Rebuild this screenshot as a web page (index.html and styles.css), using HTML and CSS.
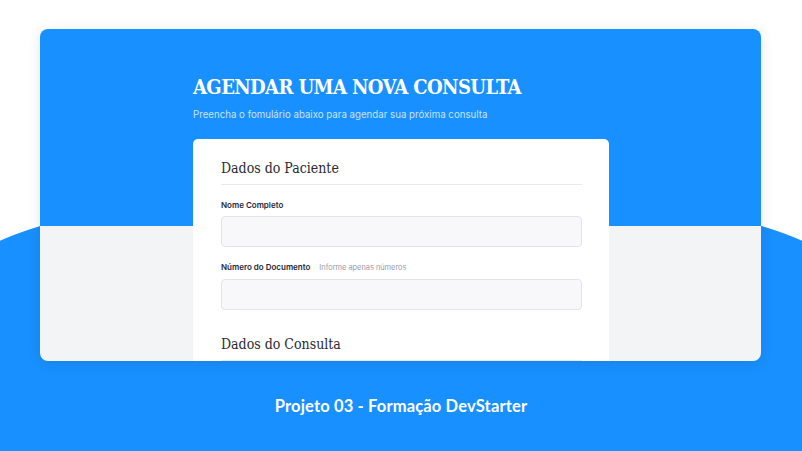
FILE: index.html
```html
<!DOCTYPE html>
<html lang="pt-BR">
<head>
<meta charset="utf-8">
<title>Agendar uma nova consulta</title>
<link rel="stylesheet" href="styles.css">
</head>
<body>
  <main class="stage">
    <section class="window">
      <header class="hero">
        <h1 class="hero-title">AGENDAR UMA NOVA CONSULTA</h1>
        <p class="hero-sub">Preencha o fomulário abaixo para agendar sua próxima consulta</p>
      </header>
      <form class="form-card">
        <h2 class="section-title">Dados do Paciente</h2>
        <div class="field">
          <label class="field-label">Nome Completo</label>
          <div class="field-input"></div>
        </div>
        <div class="field">
          <label class="field-label">Número do Documento <span class="field-hint">Informe apenas números</span></label>
          <div class="field-input"></div>
        </div>
        <h2 class="section-title section-gap">Dados do Consulta</h2>
      </form>
    </section>
  </main>
  <footer class="credit">Projeto 03 - Formação DevStarter</footer>
</body>
</html>
```

FILE: styles.css
```css
html, body {
  margin: 0;
  width: 802px;
  height: 451px;
  overflow: hidden;
}
body {
  background:
    radial-gradient(450px 101px at 401px 286px, #1890ff 99.5%, rgba(24,144,255,0) 100%),
    linear-gradient(to bottom, #ffffff 286px, #1890ff 286px);
  font-family: "Inter", "Noto Sans", sans-serif;
}
.stage {
  padding: 29px 41px 0 40px;
}
.window {
  height: 332px;
  box-sizing: border-box;
  border-radius: 8px;
  overflow: hidden;
  background: linear-gradient(to bottom, #1890ff 197px, #f3f4f6 197px);
  box-shadow: 0 2px 14px rgba(0, 0, 0, 0.10);
  padding: 46px 0 0 153px;
}
.hero-title {
  margin: 0;
  font-family: "DejaVu Serif Condensed", "DejaVu Serif", serif;
  font-weight: bold;
  font-size: 20px;
  line-height: 24px;
  color: #ffffff;
  letter-spacing: -0.6px;
}
.hero-sub {
  margin: 9px 0 0;
  font-size: 9.7px;
  line-height: 14px;
  color: #c9e3ff;
}
.form-card {
  margin-top: 17px;
  width: 416px;
  height: 260px;
  box-sizing: border-box;
  background: #ffffff;
  border-radius: 5px;
  padding: 20px 27px 0 28px;
}
.section-title {
  margin: 0;
  font-family: "DejaVu Serif Condensed", "DejaVu Serif", serif;
  font-weight: normal;
  font-size: 14px;
  line-height: 18px;
  color: #2a2a33;
  padding-bottom: 7px;
  border-bottom: 1px solid #ece8ee;
}
.section-gap {
  margin-top: 25px;
}
.field {
  display: flex;
  flex-direction: column;
  margin-top: 14px;
}
.field + .field {
  margin-top: 14px;
}
.field-label {
  font-size: 8px;
  line-height: 12px;
  font-weight: 600;
  color: #262636;
  margin-bottom: 5px;
}
.field-hint {
  font-weight: 400;
  font-size: 7.4px;
  color: #9a9aa8;
  margin-left: 7px;
}
.field-input {
  height: 29px;
  background: #f8f8fb;
  border: 1px solid #e3e3eb;
  border-radius: 4px;
}
.credit {
  text-align: center;
  margin-top: 36px;
  font-family: "Lato", "Open Sans", sans-serif;
  font-weight: 700;
  font-size: 16.5px;
  line-height: 18px;
  letter-spacing: 0.15px;
  color: #ffffff;
}
```
